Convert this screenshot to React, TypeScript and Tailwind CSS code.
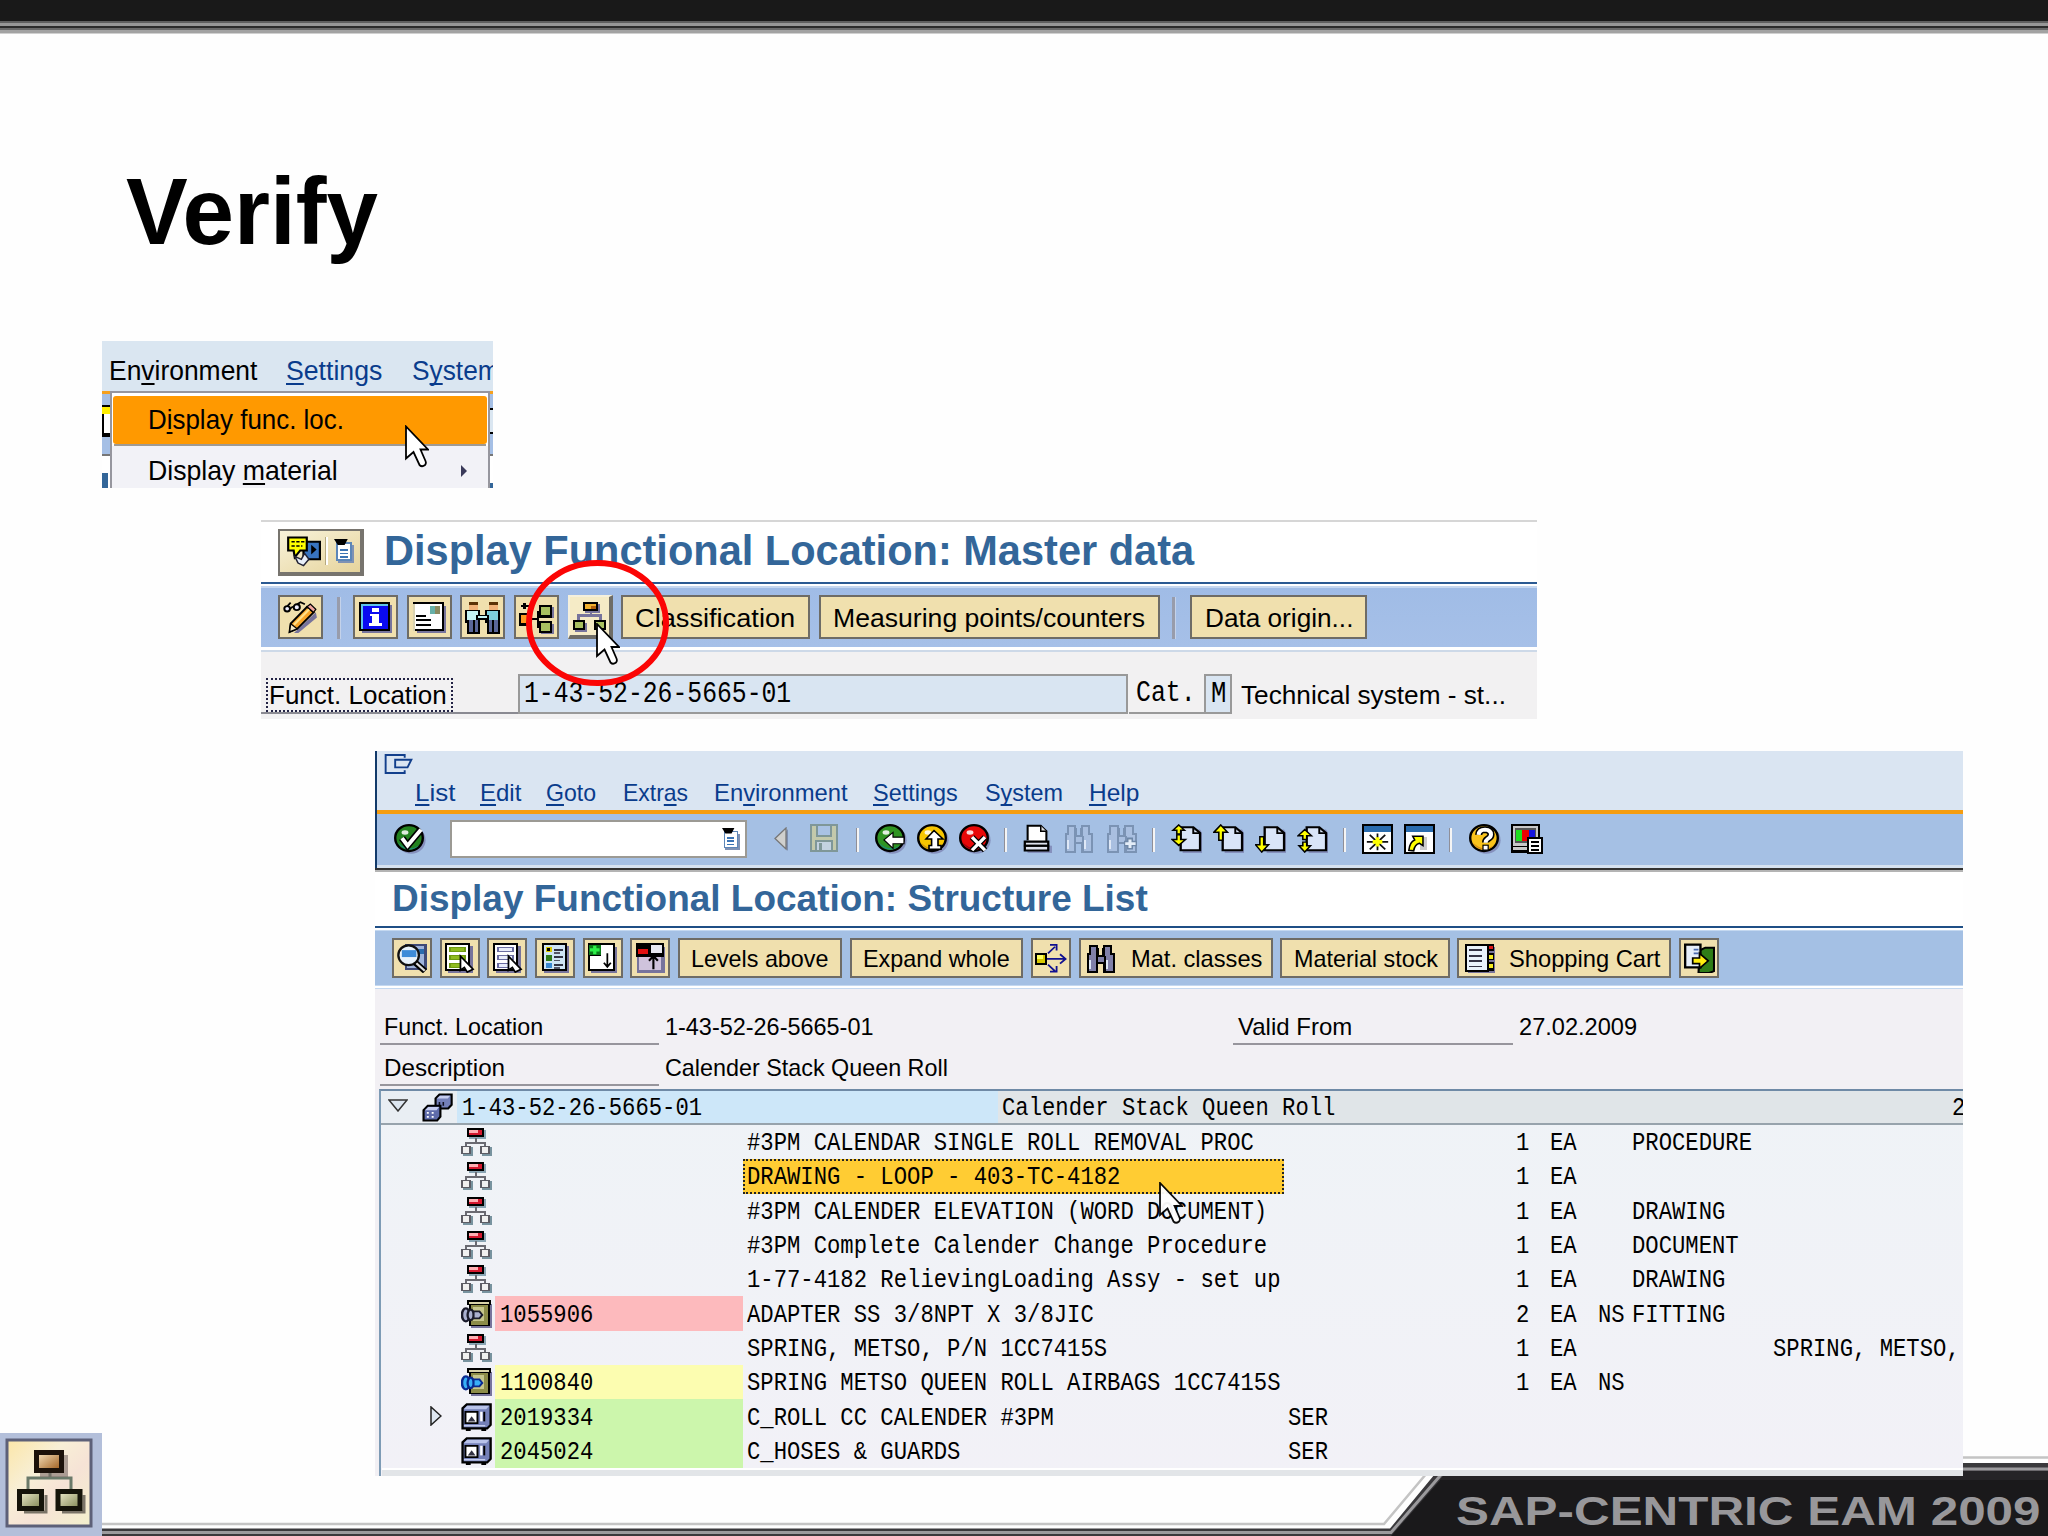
import { useLayoutEffect, useRef, useState, type ReactNode } from "react";

/* Text squeezed or stretched horizontally to the width of its box. */
function Fit({ children, className = "" }: { children: ReactNode; className?: string }) {
  const outer = useRef<HTMLSpanElement>(null);
  const inner = useRef<HTMLSpanElement>(null);
  const [k, setK] = useState(1);
  useLayoutEffect(() => {
    if (outer.current && inner.current) setK(outer.current.clientWidth / inner.current.offsetWidth);
  }, []);
  return (
    <span ref={outer} className={"block shrink-0 whitespace-pre leading-none " + className}>
      <span ref={inner} className="inline-block origin-left" style={{ transform: `scaleX(${k})` }}>
        {children}
      </span>
    </span>
  );
}

/* Menu label; the letter after & is the underlined mnemonic. */
function Mn({ t }: { t: string }) {
  const i = t.indexOf("&");
  if (i < 0) return <>{t}</>;
  return (
    <>
      {t.slice(0, i)}
      <u className="decoration-2 underline-offset-[3px] [text-decoration-skip-ink:none]">{t[i + 1]}</u>
      {t.slice(i + 2)}
    </>
  );
}

const MONO = "font-['Liberation_Mono',monospace] text-[25px]";

function Mono({ children, className = "" }: { children: ReactNode; className?: string }) {
  return (
    <span className={`${MONO} ml-[1px] block w-0 origin-left scale-x-[0.889] whitespace-pre pt-[3px] leading-none ${className}`}>
      {children}
    </span>
  );
}

type Cell = [number, number, number, number, string];

/* Icon made of rectangles on a 16 x 16 grid plus optional shapes on top. */
function Art({ d = [], children, className = "h-[29px] w-[31px]" }: { d?: Cell[]; children?: ReactNode; className?: string }) {
  return (
    <svg viewBox="0 0 16 16" preserveAspectRatio="none" className={"block shrink-0 " + className}>
      <g shapeRendering="crispEdges">
        {d.map(([x, y, w, h, f], i) => (
          <rect key={i} x={x} y={y} width={w} height={h} fill={f} />
        ))}
      </g>
      {children}
    </svg>
  );
}

function Cursor({ className = "" }: { className?: string }) {
  return (
    <svg viewBox="0 0 24 42" className={"absolute h-[42px] w-[24px] " + className}>
      <path
        d="M1 1V33L8.500 26.500L14.500 39.500Q17 42 20 39.500Q21.500 38 20.500 35.500L15.500 24H23Z"
        fill="#fff"
        stroke="#000"
        strokeWidth="1.800"
      />
    </svg>
  );
}

const K = "#000";
const W = "#fff";
const SH = "#77749c";

const ClipMenu = ({ className = "h-[22px] w-[18px]" }: { className?: string }) => (
  <Art
    className={className}
    d={[
      [3, 4, 13, 12, "#7f92b4"],
      [1.500, 2, 13, 12.500, "#5c86b8"],
      [3, 3, 10, 10.500, W],
      [4.500, 6.500, 6.500, 1.300, "#3b74b5"],
      [4.500, 9, 6.500, 1.300, "#3b74b5"],
      [4.500, 11.500, 6.500, 1, "#3b74b5"],
    ]}
  >
    <path d="M0 0H11L8.500 4H3Z" fill="#000" />
  </Art>
);

const ServiceIcon = () => (
  <Art className="h-[31px] w-[35px]">
    <path d="M8 3H15.500V12H8Z" fill="#3874c0" stroke="#000" />
    <path d="M1 .8H9.500V7.500H6.500L4 11L3.500 7.500H1Z" fill="#ff0" stroke="#000" />
    <path d="M2.500 3H8.500M2.500 5.200H7.500" stroke="#000" strokeWidth=".8" strokeDasharray="1.500 .7" />
    <path d="M11.500 4.500V9.500L14 7Z" fill="#000" />
    <path d="M4 10.500L7 12L8.500 9L10.500 12L8 15.300L5.500 14Z" fill="#e8eef8" stroke="#223" strokeWidth=".7" />
  </Art>
);

const EditIcon = () => (
  <Art className="h-[33px] w-[35px]">
    <path d="M5 15.500L15 5.500L15.500 8L7 15.500Z" fill={SH} />
    <path d="M3.500 11L11 2.800L14 5.500L6.500 13.500L3 15Z" fill="#f7a428" stroke="#000" strokeWidth=".9" />
    <path d="M3.500 11L6.500 13.500L3 15Z" fill="#f5e6c0" stroke="#000" strokeWidth=".6" />
    <path d="M5 11.500L12 4" stroke="#ffe08a" strokeWidth="1" />
    <path d="M11 2.800L12.500 1.500L15 4L14 5.500Z" fill="#f3a6a0" stroke="#000" strokeWidth=".6" />
    <g fill="#eef" stroke="#000" strokeWidth=".9">
      <circle cx="1.900" cy="3.800" r="1.300" />
      <circle cx="6.300" cy="3" r="1.400" />
    </g>
    <path d="M2 2.500L3.500 .8M3.300 4Q4 2.500 5 3M6.500 1.600L8 .6L10 1.600" fill="none" stroke="#000" strokeWidth=".8" />
  </Art>
);

const InfoIcon = () => (
  <Art
    className="h-[31px] w-[33px]"
    d={[
      [1.500, 1.500, 14.500, 14.500, SH],
      [0, 0, 15, 15, K],
      [1, 1, 13, 13, "#5fc4e8"],
      [2, 2, 12, 12, "#0a0af0"],
      [6.500, 3, 3, 2, W],
      [5.500, 6, 4, 1.200, W],
      [6.500, 6, 3, 6, W],
      [5, 11, 6, 1.500, W],
    ]}
  />
);

const MailIcon = () => (
  <Art
    className="h-[31px] w-[33px]"
    d={[
      [2, 2, 14, 14, SH],
      [0, 0, 15, 15, K],
      [1, 1, 13, 13, W],
      [0, 1, 1, 14, "#d9d2b0"],
      [8, 2, 5, 4, "#66b0a8"],
      [10.500, 2, 2.500, 4, "#8a8a60"],
      [1.500, 6.500, 5, 1, K],
      [1.500, 9, 7, 1, K],
      [1.500, 11.500, 7, 1, K],
    ]}
  />
);

const PeopleIcon = () => (
  <Art
    className="h-[33px] w-[35px]"
    d={[
      [2, 0.500, 4, 1.500, "#5a3208"],
      [2, 2, 4, 3, "#f0b27a"],
      [11, 0.500, 4, 1.500, "#5a3208"],
      [11, 2, 4, 3, "#f0b27a"],
      [0, 4.500, 7, 6, K],
      [1, 5, 5, 4.500, "#c4f4f4"],
      [9, 4.500, 7, 6, K],
      [10, 5, 5, 4.500, "#7fd0de"],
      [5, 7, 6, 2, K],
      [6, 7.200, 4, 1, "#c4f4f4"],
      [1, 9, 6, 7, K],
      [2, 9, 1.700, 6, "#5a6698"],
      [4.500, 9, 1.500, 6, "#5a6698"],
      [10, 9, 6, 7, K],
      [11, 9, 1.500, 6, "#5a6698"],
      [13.400, 9, 1.500, 6, "#5a6698"],
    ]}
  />
);

const StructIcon = () => (
  <Art
    className="h-[33px] w-[35px]"
    d={[
      [10, 3, 6, 5, SH],
      [10, 11, 6, 5, SH],
      [0, 6, 6, 6, K],
      [1, 7, 4, 3.500, "#ff9a20"],
      [6, 8, 2, 1, K],
      [8, 5, 1, 8, K],
      [9, 2, 6, 6, K],
      [10, 3, 4, 4, "#a8c060"],
      [9, 9.500, 6, 6, K],
      [10, 10.500, 4, 4, "#a8c060"],
      [1, 2, 4, 1, K],
      [2, 1, 1, 3, K],
    ]}
  />
);

const OrgIcon = () => (
  <Art
    className="h-[33px] w-[35px]"
    d={[
      [6, 2, 7, 4.500, SH],
      [5, 0.800, 7, 4.700, K],
      [6, 1.800, 5, 2.700, "#f0b030"],
      [8.500, 2.800, 2.500, 1.700, "#b06010"],
      [8, 5.500, 1, 2, SH],
      [2.500, 7, 11, 1, SH],
      [2.500, 7, 1, 3, SH],
      [12.500, 7, 1, 3, SH],
      [1.500, 11, 5.500, 4.500, SH],
      [0.500, 9.500, 5.500, 5, K],
      [1.500, 10.500, 3.500, 3, "#a8c060"],
      [10, 9.500, 5.500, 5, K],
      [11, 10.500, 3.500, 3, "#a8c060"],
    ]}
  />
);

function Ball({ color, dark, children }: { color: string; dark: string; children: ReactNode }) {
  return (
    <Art className="h-[30px] w-[32px]">
      <ellipse cx="8.600" cy="8.600" rx="7.200" ry="7.200" fill="#8590bd" />
      <circle cx="7.500" cy="7.500" r="6.900" fill={color} stroke="#000" strokeWidth="1.200" />
      <path d="M2 10Q7 15 12.500 11.500Q10 14 7 13.600Q3.500 13 2 10Z" fill={dark} />
      <ellipse cx="5.500" cy="4.500" rx="1.700" ry="1.200" fill="#fff" opacity=".85" />
      {children}
    </Art>
  );
}

const OkIcon = () => (
  <Ball color="#23821f" dark="#1d8a78">
    <path d="M4 7.500L6.800 11.500L13 3.500" fill="none" stroke="#000" strokeWidth="3.600" />
    <path d="M4 7.500L6.800 11.500L13.500 3" fill="none" stroke="#fff" strokeWidth="2" />
  </Ball>
);
const BackIcon = () => (
  <Ball color="#2f9422" dark="#1d8a78">
    <path d="M4.500 8.500L9 4.500V7H14.500V10.500H9V13Z" fill="#fff" stroke="#000" strokeWidth=".6" />
  </Ball>
);
const ExitIcon = () => (
  <Ball color="#f7c600" dark="#c98a10">
    <path d="M8.500 3.500L13 8H10.500V11.500H12V13.500H6V11.500H7.300V8H4.500Z" fill="#fff" stroke="#000" strokeWidth=".8" />
  </Ball>
);
const CancelIcon = () => (
  <Ball color="#e80808" dark="#8c0010">
    <path d="M6.500 7L13 14M13 7L6.500 14" stroke="#000" strokeWidth="3" />
    <path d="M6.500 7L13 14M13 7L6.500 14" stroke="#fff" strokeWidth="1.700" />
  </Ball>
);

const SaveIcon = () => (
  <Art
    className="h-[28px] w-[28px]"
    d={[
      [0, 0, 16, 16, "#7f9798"],
      [1, 1, 14, 14, "#c3c9ab"],
      [3.500, 0, 9, 7.500, "#7f9798"],
      [4.500, 1, 7, 5.500, "#a9c2e4"],
      [3, 9, 10, 7, "#7f9798"],
      [4, 10, 8, 5, "#c3d2e0"],
      [5, 11, 2, 4, "#7f9798"],
    ]}
  />
);

const PrintIcon = () => (
  <Art className="h-[29px] w-[30px]">
    <path d="M3 9V1H10L13 4V11" fill="#fff" stroke="#000" strokeWidth="1.100" />
    <path d="M10 1V4H13" fill="#ddd" stroke="#000" strokeWidth=".8" />
    <path d="M2 11L16 12V16H3Z" fill="#8590bd" />
    <path d="M1.500 9.700H14V14.600H1.500Z" fill="#dfe3ee" stroke="#000" strokeWidth="1.200" />
    <path d="M1 12H14.500" stroke="#000" strokeWidth="1.300" />
  </Art>
);

function Binoculars({ fill, line, plus, className = "h-[29px] w-[30px]" }: { fill: string; line: string; plus?: boolean; className?: string }) {
  return (
    <Art
      className={className}
      d={[
        [1.500, 0.500, 5, 2, line],
        [9, 0.500, 5, 2, line],
        [1.500, 2, 5.500, 4, line],
        [8.500, 2, 5.500, 4, line],
        [0.500, 5, 6, 11, line],
        [9, 5, 6.500, 11, line],
        [6, 6, 4, 5, line],
        [2.500, 1.500, 3, 5, fill],
        [10, 1.500, 3, 5, fill],
        [1.500, 6, 4, 9, fill],
        [10.500, 6, 4, 9, fill],
        [6.500, 7, 3, 3, fill],
        [1.500, 9, 1.200, 5, "#dfe8f6"],
        [10.500, 9, 1.200, 5, "#dfe8f6"],
      ]}
    >
      {plus && <path d="M12 7.500V14M9 10.800H15.500" stroke="#6f88a8" strokeWidth="3" />}
      {plus && <path d="M12 8.500V13.200M9.600 10.800H14.800" stroke="#e4edf8" strokeWidth="1.500" />}
    </Art>
  );
}

function PageIcon({ up, down, side }: { up?: number; down?: number; side: number }) {
  return (
    <Art className="h-[29px] w-[31px]">
      <path d="M6 3H15L16 5V16H6Z" fill="#8590bd" />
      <path d="M5 1.800H11.500L15 5V14.500H5Z" fill="#d9e5f8" stroke="#000" strokeWidth="1.200" />
      <path d="M11.500 1.800V5H15" fill="none" stroke="#000" />
      {up !== undefined && (
        <path
          d={up > 6 ? "M4 .5L7.500 4.500H5V9H3V4.500H.5Z" : "M4 .5L7 3.500H5V5.500H3V3.500H1Z"}
          fill="#ff0"
          stroke="#000"
          strokeWidth=".8"
        />
      )}
      {down !== undefined && (
        <path
          d={down > 6 ? "M3.500 15.500L7 11.500H4.500V7H2.500V11.500H.3Z" : "M4 15.500L7 12H5V10H3V12H1Z"}
          fill="#ff0"
          stroke="#000"
          strokeWidth=".8"
        />
      )}
      {side === 1 && <path d="M4 11.800L7.500 8.500H5V6H3V8.500H.5Z" fill="#ff0" stroke="#000" strokeWidth=".8" />}
      {side === 2 && <path d="M4 3L7.500 6.500H5V8.500H3V6.500H.5Z" fill="#ff0" stroke="#000" strokeWidth=".8" />}
    </Art>
  );
}

const NewSession = () => (
  <Art className="h-[30px] w-[31px]" d={[[0, 0, 16, 16, K], [1, 1, 14, 3, "#2a6cae"], [1, 4, 14, 11, W]]}>
    <path d="M2.500 9.500H13.500M8 5V14M4 5.800L12 13.500M12 5.800L4 13.500" stroke="#111" strokeWidth=".9" />
    <path d="M5.500 9.500H10.500M8 7V12" stroke="#ff0" strokeWidth="2" />
  </Art>
);
const Shortcut = () => (
  <Art className="h-[30px] w-[31px]" d={[[0, 0, 16, 16, K], [1, 1, 14, 3, "#2a6cae"], [1, 4, 14, 11, W], [8, 7, 4, 7, "#ccc"]]}>
    <path d="M2.500 14Q3 9.500 5.500 8.500L4.500 6.500H9.800V11.500L8 10.300Q5.500 11 5 14.300Z" fill="#ff0" stroke="#000" strokeWidth=".8" />
  </Art>
);
const HelpIcon = () => (
  <Ball color="#f9c31c" dark="#d88a14">
    <path d="M4.800 5.800Q5 3 8 3Q11 3.200 11 5.600Q11 7 9.300 8Q8.300 8.700 8.300 9.800" fill="none" stroke="#000" strokeWidth="3.600" />
    <path d="M4.800 5.800Q5 3 8 3Q11 3.200 11 5.600Q11 7 9.300 8Q8.300 8.700 8.300 10" fill="none" stroke="#fff" strokeWidth="2" />
    <rect x="7" y="11.300" width="2.600" height="2.600" fill="#fff" stroke="#000" strokeWidth=".6" />
  </Ball>
);
const LayoutIcon = () => (
  <Art
    className="h-[30px] w-[32px]"
    d={[
      [0, 0, 14.500, 12.500, K],
      [1, 1, 12.500, 10.500, "#c8c8c8"],
      [2, 2, 10.500, 8, "#555"],
      [2.500, 3, 3, 6, "#1fe01f"],
      [5.500, 3, 3.500, 6, "#f00000"],
      [9, 3, 3, 6, "#1414e0"],
      [0, 12, 12, 3.500, K],
      [1, 12.500, 10, 1.500, "#c8c8c8"],
      [8, 7, 8, 9, K],
      [9, 8, 6, 7, W],
      [10, 9.300, 4, 1, K],
      [10, 11.300, 4, 1, K],
      [10, 13.200, 4, 1, K],
    ]}
  />
);

const ListBase = (bar: string, inner: string): Cell[] => [
  [2, 1.500, 13, 14.500, SH],
  [0.500, 0, 13, 15, K],
  [1.800, 1.200, 10.400, 12.600, W],
  [2.500, 2, 9, 3, bar],
  [3.500, 2.800, 7, 1.300, inner],
  [2.500, 6.200, 9, 3, bar],
  [3.500, 7, 7, 1.300, inner],
  [2.500, 10.500, 9, 3, bar],
  [3.500, 11.300, 7, 1.300, inner],
];
const Hand = () => <path d="M8.500 7V14.500L10.500 13L12 15.500L15 14Z" fill="#fff" stroke="#000" strokeWidth=".9" />;

const DetailIcon = () => (
  <Art className="h-[30px] w-[31px]" d={[[4, 0.500, 11.500, 14, "#3f4a78"], [5, 1.500, 9, 12, "#9fb4dc"], [11, 3, 3, 3, "#2a6cae"]]}>
    <circle cx="6" cy="6.500" r="5.300" fill="#e8f2fb" stroke="#111" strokeWidth="1.200" />
    <path d="M2.500 3.800H10V7.500H2.500Z" fill="#3d8bd8" />
    <path d="M9.500 10.500L14.500 15" stroke="#000" strokeWidth="3.200" />
    <path d="M10 10.800L14.300 14.800" stroke="#ddd" strokeWidth="1.200" />
  </Art>
);
const SelectAll = () => <Art className="h-[30px] w-[31px]" d={ListBase("#6f9a10", "#8fbb20")}><Hand /></Art>;
const DeselectAll = () => <Art className="h-[30px] w-[31px]" d={ListBase("#6a6ca0", "#e8ecfa")}><Hand /></Art>;
const ChoiceIcon = () => (
  <Art
    className="h-[30px] w-[31px]"
    d={[
      [2, 1.500, 13, 14.500, SH],
      [1, 0, 13, 15, K],
      [2, 1, 11, 13, "#cfe4f4"],
      [3, 2, 3, 3, "#d8c800"],
      [3.800, 2.800, 1.400, 1.400, K],
      [3, 6.500, 3, 3, "#2f7a1a"],
      [3, 10.500, 3, 3, "#3b88d0"],
      [7, 3, 5, 1, "#334"],
      [7, 5, 3.500, 0.800, "#556"],
      [7, 7, 5, 1, "#334"],
      [7, 9, 3.500, 0.800, "#556"],
      [7, 11, 5, 1, "#334"],
      [7, 12.800, 3.500, 0.800, "#556"],
    ]}
  />
);
const ExpandIcon = () => (
  <Art className="h-[30px] w-[31px]" d={[[2, 2, 13.500, 14, SH], [0.500, 0, 14, 15, K], [1.500, 7, 6, 7, W], [7, 1, 6.500, 13, W], [1, 1, 6, 5.500, "#0b7a1a"]]}>
    <path d="M4 1.500V6M1.500 3.700H6.500" stroke="#2df04a" strokeWidth="1.700" />
    <path d="M10.500 5.500V12.500M8.700 10.500L10.500 12.700L12.300 10.500" fill="none" stroke="#000" strokeWidth=".9" />
  </Art>
);
const CollapseIcon = () => (
  <Art
    className="h-[30px] w-[31px]"
    d={[[1, 2, 14.500, 14, SH], [0.500, 0, 14.500, 7.500, K], [1.500, 3, 5, 3, "#e01010"], [8, 1, 6, 4.500, "#e8e8f0"], [2, 7.500, 11.500, 7, "#cfc3dc"]]}
  >
    <path d="M9.500 6.500V14M7.200 9.500L9.500 7L11.800 9.500" fill="none" stroke="#000" strokeWidth="1.100" />
  </Art>
);
const WhereUsed = () => (
  <Art className="h-[30px] w-[32px]" d={[[0, 5.500, 6, 6, K], [1, 6.500, 4, 4, "#d8c800"], [1, 6.500, 3, 2, "#ffff60"]]}>
    <path d="M6 8.500H15M12.500 6L15.300 8.500L12.500 11M6.500 5.500L10 2M7.500 1H10.800V4M6.500 11.500L10 15M7.500 15.300H10.800V12.300" fill="none" stroke="#101090" strokeWidth=".9" />
  </Art>
);
const Notebook = () => (
  <Art
    className="h-[29px] w-[31px]"
    d={[
      [1.500, 1.500, 14, 14.500, SH],
      [0, 0, 12.500, 15.500, K],
      [1, 1, 10.500, 13.500, "#e9f2fa"],
      [2, 3, 7, 0.900, "#334"],
      [2, 6, 7, 0.900, "#334"],
      [2, 9, 7, 0.900, "#334"],
      [2, 12, 7, 0.900, "#334"],
      [12, 0, 3, 4, K],
      [12.500, 1, 1.700, 2, "#e01818"],
      [12, 5, 3, 4, K],
      [12.500, 6, 1.700, 2, "#f3ea20"],
      [12, 10, 3, 5, K],
      [12.500, 11, 1.700, 2.500, "#f3ea20"],
    ]}
  />
);
const ExportIcon = () => (
  <Art className="h-[30px] w-[31px]">
    <path d="M8 4L11 2.500H15.500V15L13 16H7.500Z" fill="#2f7d18" stroke="#000" strokeWidth="1.100" />
    <path d="M.6.800H8.500V13H.6Z" fill="#e6eefa" stroke="#000" strokeWidth="1.200" />
    <path d="M5 3.500H7.500M5 5.500H7.500" stroke="#4a6ab0" strokeWidth=".9" />
    <path d="M4.500 8H8V5.500L12.500 9.500L8 13.500V11H4.500Z" fill="#ffee10" stroke="#000" strokeWidth=".9" />
  </Art>
);

/* Row icons of the structure list */
const DocNode = () => (
  <Art
    className="h-[28px] w-[31px]"
    d={[
      [4, 1, 9, 5, "#8aa5b4"],
      [3, 0, 9, 5, K],
      [4, 1, 7, 3, "#d4182f"],
      [4, 1, 5, 2, "#ffb0b4"],
      [7, 5.500, 1, 2.500, "#6a6a72"],
      [2, 8, 11, 1, "#6a6a72"],
      [2, 8, 1, 2, "#6a6a72"],
      [12, 8, 1, 2, "#6a6a72"],
      [1, 11, 5, 5, "#78939f"],
      [0, 10, 5, 5, "#5c5c64"],
      [1, 11, 3, 3, "#f0f0f0"],
      [11, 11, 5, 5, "#78939f"],
      [10, 10, 5, 5, "#5c5c64"],
      [11, 11, 3, 3, "#f0f0f0"],
    ]}
  />
);
function MaterialNode({ bolt, glow }: { bolt: string; glow: string }) {
  return (
    <Art
      className="h-[28px] w-[31px]"
      d={[
        [5, 2, 11, 14, SH],
        [3, 0, 12.500, 3, K],
        [4, 1, 10.500, 1, "#d9d3a8"],
        [4, 3, 11, 12, K],
        [5, 3, 9, 11, "#8c8c48"],
        [6, 4, 6, 8, "#c6c68c"],
      ]}
    >
      <ellipse cx="2.500" cy="8.500" rx="2" ry="3.700" fill={glow} stroke={bolt} strokeWidth="1.300" />
      <ellipse cx="5" cy="8.500" rx="1.600" ry="3" fill={glow} stroke={bolt} strokeWidth="1.200" />
      <path d="M6.500 6.500H9.500L11 8.500L9.500 10.500H6.500Z" fill={glow} stroke={bolt} strokeWidth="1" />
    </Art>
  );
}
const EquipNode = () => (
  <Art className="h-[28px] w-[31px]">
    <path d="M.8 3L3 .8H15.300V12.500L13.500 14.500H.8Z" fill="#7480b8" stroke="#000" strokeWidth="1.200" />
    <path d="M1.500 3.500L3.200 1.600H14.500L13 3.500Z" fill="#b9c3ea" />
    <path d="M2.300 5H8.500V11.500H2.300Z" fill="#fff" stroke="#000" />
    <path d="M3.500 10.500L5.500 7.500L7.500 10.500Z" fill="#334" />
    <path d="M10.500 5V10.500" stroke="#fff" strokeWidth="1.200" />
    <path d="M12 5V10.500" stroke="#000" strokeWidth="1" />
    <path d="M1.500 13H12.500" stroke="#c8d0f0" strokeWidth=".8" />
    <path d="M2.500 15.300H5M10.500 15.300H13" stroke="#000" strokeWidth="1.300" />
  </Art>
);
const LocationIcon = () => (
  <Art className="h-[29px] w-[31px]">
    <path d="M7 3L9 .8H15.300V6.500L13.500 8.500H7Z" fill="#7480b8" stroke="#000" strokeWidth="1.100" />
    <path d="M7.700 3L9.300 1.500H14.500L13.300 3Z" fill="#c5cdf0" />
    <path d="M9 5V7M11 5V7" stroke="#112" strokeWidth=".8" />
    <path d="M.8 9.500L3 7H9.500V13L7.800 15.200H.8Z" fill="#5f6cab" stroke="#000" strokeWidth="1.100" />
    <path d="M1.500 9.500L3.200 7.700H8.800L7.500 9.500Z" fill="#c5cdf0" />
    <path d="M2.500 11H3.500M5 11H6M2.500 13.200H3.500M5 13.200H6" stroke="#fff" strokeWidth=".9" />
  </Art>
);

function Btn({ children, className = "" }: { children: ReactNode; className?: string }) {
  return (
    <div className={"box-border flex shrink-0 items-center border-2 border-[#6e6c66] bg-[#f0e0ae] " + className}>{children}</div>
  );
}

const IB = "h-[44px] w-[45px] justify-center";
const SB = "h-[40px] w-[40px] justify-center";

function Slot({ children }: { children: ReactNode }) {
  return <div className="flex w-[32px] shrink-0">{children}</div>;
}
function Sep({ className = "" }: { className?: string }) {
  return <div className={"h-[24px] w-[3px] shrink-0 border-l border-[#8f8f98] bg-[#f4f4f4] " + className} />;
}

type Row = {
  kind: "doc" | "mat" | "matBlue" | "equip";
  id?: string;
  tone?: string;
  text: string;
  ser?: boolean;
  qty?: string;
  ns?: boolean;
  cat?: string;
  extra?: string;
  sel?: boolean;
  arrow?: boolean;
};

const rows: Row[] = [
  { kind: "doc", text: "#3PM CALENDAR SINGLE ROLL REMOVAL PROC", qty: "1", cat: "PROCEDURE" },
  { kind: "doc", text: "DRAWING - LOOP - 403-TC-4182", qty: "1", sel: true },
  { kind: "doc", text: "#3PM CALENDER ELEVATION (WORD DOCUMENT)", qty: "1", cat: "DRAWING" },
  { kind: "doc", text: "#3PM Complete Calender Change Procedure", qty: "1", cat: "DOCUMENT" },
  { kind: "doc", text: "1-77-4182 RelievingLoading Assy - set up", qty: "1", cat: "DRAWING" },
  { kind: "mat", id: "1055906", tone: "bg-[#fdbabd]", text: "ADAPTER SS 3/8NPT X 3/8JIC", qty: "2", ns: true, cat: "FITTING" },
  { kind: "doc", text: "SPRING, METSO, P/N 1CC7415S", qty: "1", extra: "SPRING, METSO," },
  { kind: "matBlue", id: "1100840", tone: "bg-[#fcfdb0]", text: "SPRING METSO QUEEN ROLL AIRBAGS 1CC7415S", qty: "1", ns: true },
  { kind: "equip", id: "2019334", tone: "bg-[#ccf6ac]", text: "C_ROLL CC CALENDER #3PM", ser: true, arrow: true },
  { kind: "equip", id: "2045024", tone: "bg-[#ccf6ac]", text: "C_HOSES & GUARDS", ser: true },
];

function NodeIcon({ kind }: { kind: Row["kind"] }) {
  if (kind === "doc") return <DocNode />;
  if (kind === "equip") return <EquipNode />;
  if (kind === "mat") return <MaterialNode bolt="#1a1a2a" glow="#aab0d0" />;
  return <MaterialNode bolt="#0a2a90" glow="#38b0f8" />;
}

function TreeRow({ r }: { r: Row }) {
  return (
    <div className="grid h-[34.3px] shrink-0 grid-cols-[79px_34px_248px_541px_229px_35px_49px_34px_141px_191px] items-center">
      <div className="flex justify-end pr-[19px]">
        {r.arrow && (
          <svg viewBox="0 0 12 20" className="-mt-[2px] h-[20px] w-[12px]">
            <path d="M1 1V19L11 10Z" fill="#dde6f0" stroke="#222" strokeWidth="1.500" />
          </svg>
        )}
      </div>
      <div>
        <NodeIcon kind={r.kind} />
      </div>
      <div className={"flex h-full items-center pl-[4px] " + (r.tone ?? "")}>{r.id && <Mono>{r.id}</Mono>}</div>
      <div
        className={
          r.sel
            ? "flex h-full items-center border-2 border-dotted border-[#222] bg-[#ffcc33] pl-[1px]"
            : "flex h-full items-center pl-[3px]"
        }
      >
        <Mono>{r.text}</Mono>
      </div>
      <div className="pl-[3px]">{r.ser && <Mono>SER</Mono>}</div>
      <div className="pl-[2px]">{r.qty && <Mono>{r.qty}</Mono>}</div>
      <div className="pl-[1px]">{r.qty && <Mono>EA</Mono>}</div>
      <div>{r.ns && <Mono>NS</Mono>}</div>
      <div>{r.cat && <Mono>{r.cat}</Mono>}</div>
      <div>{r.extra && <Mono>{r.extra}</Mono>}</div>
    </div>
  );
}

function EnvironmentMenu() {
  return (
    <div className="relative ml-[102px] mt-[82px] flex h-[147px] w-[391px] flex-col overflow-hidden bg-[#f2f2f7] text-[27.500px]">
      <div className="flex h-[50px] shrink-0 items-center bg-[#dae6f1] pl-[7px] pt-[10px] text-[#0a3c8c]">
        <Fit className="w-[148px] text-black">
          <Mn t="En&vironment" />
        </Fit>
        <Fit className="ml-[29px] w-[96px]">
          <Mn t="&Settings" />
        </Fit>
        <Fit className="ml-[30px] w-[88px]">
          <Mn t="S&ystem" />
        </Fit>
      </div>
      <div className="flex flex-1">
        <div className="flex w-[8px] flex-col">
          <div className="h-[3px] bg-[#f5a01e]" />
          <div className="h-[11px] bg-[#a5bfe5]" />
          <div className="h-[2px] bg-black" />
          <div className="h-[7px] bg-[#ffee00]" />
          <div className="h-[19px] border-l-2 border-black bg-white" />
          <div className="h-[4px] bg-black" />
          <div className="h-[17px] bg-[#a5bfe5]" />
          <div className="h-[2px] bg-[#777]" />
          <div className="h-[17px] bg-white" />
          <div className="h-[15px] border-r-2 border-white bg-[#336699]" />
        </div>
        <div className="flex w-[380px] flex-col border-x-2 border-t-2 border-[#96969e] bg-white pt-[3px]">
          <div className="mx-[1px] flex h-[48px] shrink-0 items-center rounded-[3px] bg-[#ff9900] pl-[35px]">
            <Fit className="w-[196px]">
              <Mn t="D&isplay func. loc." />
            </Fit>
          </div>
          <div className="mx-[2px] h-[2px] shrink-0 bg-[#a09a92]" />
          <div className="flex h-[48px] shrink-0 items-center bg-[#f2f2f7] pl-[36px] pt-[2px]">
            <Fit className="w-[190px]">
              <Mn t="Display &material" />
            </Fit>
            <svg viewBox="0 0 6 12" className="ml-[123px] h-[12px] w-[6px]">
              <path d="M0 0L6 6L0 12Z" fill="#3a3a5a" />
            </svg>
          </div>
        </div>
        <div className="flex w-[3px] flex-col">
          <div className="h-[3px] bg-[#f5a01e]" />
          <div className="h-[14px] bg-[#a5bfe5]" />
          <div className="h-[26px] border-y-2 border-black bg-[#dae6f1]" />
          <div className="h-[20px] bg-[#a5bfe5]" />
          <div className="h-[2px] bg-[#777]" />
          <div className="h-[27px] bg-white" />
          <div className="h-[5px] bg-[#336699]" />
        </div>
      </div>
      <Cursor className="left-[303px] top-[84px] h-[43px]" />
    </div>
  );
}

function MasterData() {
  return (
    <div className="relative ml-[261px] mt-[32px] flex h-[199px] w-[1276px] flex-col border-t-2 border-[#d6d6d6] bg-[#f2f1f2] text-[26px]">
      <div className="flex h-[60px] shrink-0 items-center bg-white pl-[17px]">
        <div className="flex h-[47px] w-[86px] items-center border-2 border-b-4 border-r-4 border-[#77746e] bg-linear-to-br from-[#f8f2da] to-[#e6d49c] pl-[6px]">
          <ServiceIcon />
          <div className="ml-[4px] h-[28px] w-[3px] border-l border-[#b5a980] bg-white" />
          <ClipMenu className="ml-[6px] h-[24px] w-[20px]" />
        </div>
        <Fit className="-mt-[2px] ml-[20px] w-[810px] text-[42px] font-bold text-[#336699]">Display Functional Location: Master data</Fit>
      </div>
      <div className="h-[2px] shrink-0 bg-[#2b5a92]" />
      <div className="h-[2px] shrink-0 bg-white" />
      <div className="flex h-[61px] shrink-0 items-start gap-[8.600px] border-t-2 border-[#c5d7f0] bg-linear-to-b from-[#a0bce6] to-[#a6c0e8] pl-[17px] pt-[7px]">
        <Btn className={IB}><EditIcon /></Btn>
        <div className="ml-[5px] mr-[4px] mt-[2px] h-[42px] w-[4px] border-r border-[#c4d2ea] bg-[#989cab]" />
        <Btn className={IB}><InfoIcon /></Btn>
        <Btn className={IB}><MailIcon /></Btn>
        <Btn className={IB}><PeopleIcon /></Btn>
        <Btn className={IB}><StructIcon /></Btn>
        <Btn className={IB + " border-b-4 border-r-4 border-l-[#f5f0dc] border-t-[#f5f0dc] bg-[#f5ebc6]"}><OrgIcon /></Btn>
        <Btn className="h-[44px] w-[189px] pl-[12px] pt-[1px]"><Fit className="w-[160px]">Classification</Fit></Btn>
        <Btn className="h-[44px] w-[341px] pl-[12px] pt-[1px]"><Fit className="w-[312px]">Measuring points/counters</Fit></Btn>
        <div className="ml-[4px] mr-[5px] mt-[2px] h-[42px] w-[4px] border-r border-[#c4d2ea] bg-[#989cab]" />
        <Btn className="h-[44px] w-[177px] pl-[13px] pt-[1px]"><Fit className="w-[148px]">Data origin...</Fit></Btn>
      </div>
      <div className="h-[3px] shrink-0 bg-white" />
      <div className="h-[2px] shrink-0 bg-[#cdd9e8]" />
      <div className="flex h-[67px] items-start pt-[22px]">
        <div className="flex w-[257px] border-b-2 border-[#8a8a92] pl-[5px]">
          <div className="flex h-[38px] items-end">
            <div className="flex h-[34px] w-[187px] items-center border-2 border-dotted border-[#222244] pl-[1px]">
              <Fit className="w-[178px]">Funct. Location</Fit>
            </div>
          </div>
        </div>
        <div className="flex h-[40px] w-[610px] items-center border-2 border-[#999] bg-[#d9e5f2] pl-[4px] font-['Liberation_Mono',monospace] text-[29px]">
          <Fit className="w-[267px]">1-43-52-26-5665-01</Fit>
        </div>
        <div className="ml-[1px] flex h-[40px] w-[75px] items-center border-b-2 border-[#999] pl-[7px] font-['Liberation_Mono',monospace] text-[29px]">
          <Fit className="w-[60px]">Cat.</Fit>
        </div>
        <div className="flex h-[40px] w-[28px] items-center border-2 border-[#999] bg-[#d9e5f2] pl-[5px] font-['Liberation_Mono',monospace] text-[29px]">
          <Fit className="w-[15px]">M</Fit>
        </div>
        <Fit className="ml-[9px] mt-[8px] w-[265px]">Technical system - st...</Fit>
      </div>
      <svg viewBox="0 0 144 126" className="absolute left-[265px] top-[38px] h-[126px] w-[144px]">
        <ellipse cx="71.500" cy="63" rx="68.500" ry="60" fill="none" stroke="#fb0505" strokeWidth="6" />
      </svg>
      <Cursor className="left-[335px] top-[101px]" />
    </div>
  );
}

function StructureList() {
  return (
    <div className="relative ml-[375px] mt-[32px] flex h-[725px] w-[1588px] flex-col overflow-hidden bg-[#f2f0f4] text-[24px]">
      <div className="flex h-[117px] shrink-0 flex-col border-l-2 border-[#123a6a]">
        <div className="h-[59px] bg-[#dae5f2] pt-[3px] text-[#0a3c8c]">
          <svg viewBox="0 0 29 21" className="ml-[7px] h-[20px] w-[29px]">
            <path d="M21 4V1H1V20H21V17M11 6H28L24 14H11Z" fill="none" stroke="#123f8c" strokeWidth="2" />
          </svg>
          <div className="flex h-[36px] items-center pl-[38px] pt-[2px]">
            <Fit className="w-[40px]"><Mn t="&List" /></Fit>
            <Fit className="ml-[25px] w-[41px]"><Mn t="&Edit" /></Fit>
            <Fit className="ml-[25px] w-[50px]"><Mn t="&Goto" /></Fit>
            <Fit className="ml-[27px] w-[65px]"><Mn t="Extr&as" /></Fit>
            <Fit className="ml-[26px] w-[134px]"><Mn t="En&vironment" /></Fit>
            <Fit className="ml-[25px] w-[85px]"><Mn t="&Settings" /></Fit>
            <Fit className="ml-[27px] w-[78px]"><Mn t="S&ystem" /></Fit>
            <Fit className="ml-[26px] w-[50px]"><Mn t="&Help" /></Fit>
          </div>
        </div>
        <div className="h-[4px] bg-[#f59d10]" />
        <div className="flex h-[51px] items-start bg-[#a5c0e4] pt-[10px]">
          <div className="ml-[17px] flex w-[56px]"><OkIcon /></div>
          <div className="-mt-[4px] flex h-[38px] w-[297px] items-center justify-end border-2 border-[#9c9a94] bg-white pr-[5px]">
            <ClipMenu />
          </div>
          <svg viewBox="0 0 16 24" className="ml-[27px] mt-[3px] h-[24px] w-[16px]">
            <path d="M14 2V24L5 14Z" fill="#7f8fb0" />
            <path d="M1 11.500L12 1V22Z" fill="#d0d0ce" stroke="#777" strokeWidth="1.300" />
          </svg>
          <div className="ml-[20px]"><SaveIcon /></div>
          <Sep className="ml-[18px] mt-[4px]" />
          <div className="ml-[16px] flex gap-[10px]">
            <Slot><BackIcon /></Slot>
            <Slot><ExitIcon /></Slot>
            <Slot><CancelIcon /></Slot>
          </div>
          <Sep className="ml-[13px] mt-[4px]" />
          <div className="ml-[15px] flex gap-[10px]">
            <Slot><PrintIcon /></Slot>
            <Slot><Binoculars fill="#a9bfe0" line="#7b93b4" /></Slot>
            <Slot><Binoculars fill="#a9bfe0" line="#7b93b4" plus className="h-[29px] w-[32px]" /></Slot>
          </div>
          <Sep className="ml-[14px] mt-[4px]" />
          <div className="ml-[16px] flex gap-[10px]">
            <Slot><PageIcon up={3} side={1} /></Slot>
            <Slot><PageIcon up={9} side={0} /></Slot>
            <Slot><PageIcon down={9} side={0} /></Slot>
            <Slot><PageIcon down={3} side={2} /></Slot>
          </div>
          <Sep className="ml-[14px] mt-[4px]" />
          <div className="ml-[16px] flex gap-[10px]">
            <Slot><NewSession /></Slot>
            <Slot><Shortcut /></Slot>
          </div>
          <Sep className="ml-[13px] mt-[4px]" />
          <div className="ml-[17px] flex gap-[10px]">
            <Slot><HelpIcon /></Slot>
            <Slot><LayoutIcon /></Slot>
          </div>
        </div>
        <div className="h-[3px] bg-[#d6e2f0]" />
      </div>
      <div className="h-[2px] shrink-0 bg-[#333]" />
      <div className="h-[2px] shrink-0 bg-[#b4b4b4]" />
      <div className="flex h-[54px] shrink-0 items-center bg-white pl-[17px]">
        <Fit className="w-[756px] text-[37.500px] font-bold text-[#336699]">Display Functional Location: Structure List</Fit>
      </div>
      <div className="h-[2px] shrink-0 bg-[#1f4f86]" />
      <div className="h-[3px] shrink-0 border-b border-[#c4d8f0] bg-white" />
      <div className="flex h-[54px] shrink-0 items-start gap-[7.700px] bg-[#a4c0e4] pl-[17px] pt-[7px]">
        <Btn className={SB}><DetailIcon /></Btn>
        <Btn className={SB}><SelectAll /></Btn>
        <Btn className={SB}><DeselectAll /></Btn>
        <Btn className={SB}><ChoiceIcon /></Btn>
        <Btn className={SB}><ExpandIcon /></Btn>
        <Btn className={SB}><CollapseIcon /></Btn>
        <Btn className="h-[40px] w-[163.800px] pl-[11px] pt-[1px]"><Fit className="w-[137px]">Levels above</Fit></Btn>
        <Btn className="h-[40px] w-[173.800px] pl-[11px] pt-[1px]"><Fit className="w-[147px]">Expand whole</Fit></Btn>
        <Btn className={SB}><WhereUsed /></Btn>
        <Btn className="h-[40px] w-[193.800px] pl-[5px]">
          <Binoculars fill="#8080a8" line="#000" />
          <Fit className="ml-[15px] w-[131px] pt-[1px]">Mat. classes</Fit>
        </Btn>
        <Btn className="h-[40px] w-[169.400px] pl-[12px] pt-[1px]"><Fit className="w-[144px]">Material stock</Fit></Btn>
        <Btn className="h-[40px] w-[214px] pl-[6px]">
          <Notebook />
          <Fit className="ml-[13px] w-[151px] pt-[1px]">Shopping Cart</Fit>
        </Btn>
        <Btn className={SB}><ExportIcon /></Btn>
      </div>
      <div className="h-[3px] shrink-0 border-t border-[#c4d8f0] bg-white" />
      <div className="h-px shrink-0 bg-[#c4d8f0]" />
      <div className="flex h-[56px] shrink-0 items-end pl-[5px]">
        <div className="flex h-[34px] w-[279px] items-center border-b-2 border-[#97959c] pl-[4px]">
          <Fit className="w-[159px]">Funct. Location</Fit>
        </div>
        <div className="flex h-[34px] w-[574px] items-center pb-[2px] pl-[6px]">
          <Fit className="w-[208px]">1-43-52-26-5665-01</Fit>
        </div>
        <div className="flex h-[34px] w-[280px] items-center border-b-2 border-[#97959c] pl-[5px]">
          <Fit className="w-[114px]">Valid From</Fit>
        </div>
        <div className="flex h-[34px] items-center pb-[2px] pl-[6px]">
          <Fit className="w-[118px]">27.02.2009</Fit>
        </div>
      </div>
      <div className="flex h-[41px] shrink-0 items-end pl-[5px]">
        <div className="flex h-[35px] w-[279px] items-center border-b-2 border-[#97959c] pl-[4px]">
          <Fit className="w-[121px]">Description</Fit>
        </div>
        <div className="flex h-[35px] items-center pb-[2px] pl-[6px]">
          <Fit className="w-[283px]">Calender Stack Queen Roll</Fit>
        </div>
      </div>
      <div className="ml-[4px] mt-[3px] flex flex-1 flex-col border-l-2 border-t-2 border-l-[#7d9bb5] border-t-[#6f8aa6] bg-linear-to-b from-[#eff3f7] to-[#f2f1f7] pl-[1px]">
        <div className="-ml-[1px] flex h-[34px] shrink-0 border-b-2 border-[#97a3ac]">
          <div className="flex w-[76px] items-center bg-[#e9eef3]">
            <svg viewBox="0 0 20 13" className="-mt-[4px] ml-[7px] h-[13px] w-[20px]">
              <path d="M1 1H19L10 12Z" fill="#dde6f0" stroke="#333" strokeWidth="1.500" />
            </svg>
            <div className="ml-[14px]"><LocationIcon /></div>
          </div>
          <div className="flex w-[541px] items-center bg-[#cde7f9] pl-[4px]"><Mono>1-43-52-26-5665-01</Mono></div>
          <div className="flex flex-1 items-center bg-[#e0e5e8] pl-[3px]"><Mono>Calender Stack Queen Roll</Mono></div>
          <div className="flex w-[12px] items-center bg-[#e0e5e8]"><Mono>2</Mono></div>
        </div>
        {rows.map((r) => (
          <TreeRow key={r.text} r={r} />
        ))}
        <div className="h-[2px] shrink-0 bg-white" />
        <div className="flex-1 bg-[#e2e5e8]" />
      </div>
      <Cursor className="left-[784px] top-[431px] h-[41px] opacity-95" />
    </div>
  );
}

function Footer() {
  return (
    <>
      <div className="absolute bottom-0 left-0 h-[80px] w-full">
        <svg viewBox="0 0 2048 80" className="block h-[80px] w-full">
          <path d="M0 68H1384L1440 1.500H2048" fill="none" stroke="#c4c4c4" strokeWidth="2.500" />
          <path d="M0 72.500H1390L1444 7H2048V80H0Z" fill="#3a393c" />
          <path d="M0 76.500H1391L1446 13H2048" fill="none" stroke="#9b9a9d" strokeWidth="3" />
          <path d="M1391 80L1448 15H2048V80Z" fill="#1a191b" />
          <path d="M1448 15H2048V24H1440Z" fill="#252427" />
        </svg>
      </div>
      <div className="absolute bottom-0 right-[8px] flex h-[50px] items-center text-[40px] font-bold text-[#98979a]">
        <Fit className="w-[584px]">SAP-CENTRIC EAM 2009</Fit>
      </div>
      <svg viewBox="0 0 102 103" className="absolute bottom-0 left-0 h-[103px] w-[102px]">
        <defs>
          <linearGradient id="tile" x1="0" y1="0" x2="1" y2="1">
            <stop offset="0" stopColor="#fbe6a8" />
            <stop offset=".35" stopColor="#f8efd6" />
            <stop offset=".6" stopColor="#f6e3d6" />
            <stop offset="1" stopColor="#f3f0cc" />
          </linearGradient>
          <linearGradient id="amber" x1="0" y1="0" x2="1" y2="1">
            <stop offset="0" stopColor="#fbe9c6" />
            <stop offset="1" stopColor="#9a5614" />
          </linearGradient>
          <linearGradient id="olive" x1="0" y1="0" x2="1" y2="1">
            <stop offset="0" stopColor="#f2efd0" />
            <stop offset="1" stopColor="#7d8450" />
          </linearGradient>
        </defs>
        <rect width="102" height="103" fill="#b3bfda" />
        <rect x="7" y="7" width="84" height="86" fill="url(#tile)" stroke="#5d6078" strokeWidth="3" />
        <path d="M28 58V45H71V58M50 38V45" fill="none" stroke="#6b7a6a" strokeWidth="3" />
        <rect x="40" y="22" width="28" height="22" fill="#7a6a66" opacity=".6" />
        <rect x="36.500" y="19.500" width="25" height="18" fill="url(#amber)" stroke="#1c120a" strokeWidth="5" />
        <path d="M24 79H46V62" fill="none" stroke="#7a7468" strokeWidth="3" />
        <rect x="19.500" y="58.500" width="22" height="17" fill="url(#olive)" stroke="#15140a" strokeWidth="5" />
        <path d="M62 79H84V62" fill="none" stroke="#7a7468" strokeWidth="3" />
        <rect x="58" y="58.500" width="22" height="17" fill="url(#olive)" stroke="#15140a" strokeWidth="5" />
      </svg>
    </>
  );
}

export default function App() {
  return (
    <div className="relative h-[1536px] w-[2048px] overflow-hidden bg-[#fefefe] font-['Liberation_Sans',sans-serif] text-black">
      <Footer />
      <div className="relative flex flex-col">
        <div className="h-[21px] bg-[#191919]" />
        <div className="h-[2px] bg-[#5f5f5f]" />
        <div className="h-[3px] bg-[#979797]" />
        <div className="h-[2px] bg-[#2c2c2c]" />
        <div className="h-[2px] bg-[#6a6a6a]" />
        <div className="h-[3px] bg-[#a2a2a2]" />
        <div className="h-px bg-[#d0d0d0]" />
        <h1 className="ml-[126px] mt-[131px] flex h-[94px] text-[94px] font-bold">
          <Fit className="w-[252px]">Verify</Fit>
        </h1>
        <EnvironmentMenu />
        <MasterData />
        <StructureList />
      </div>
    </div>
  );
}
